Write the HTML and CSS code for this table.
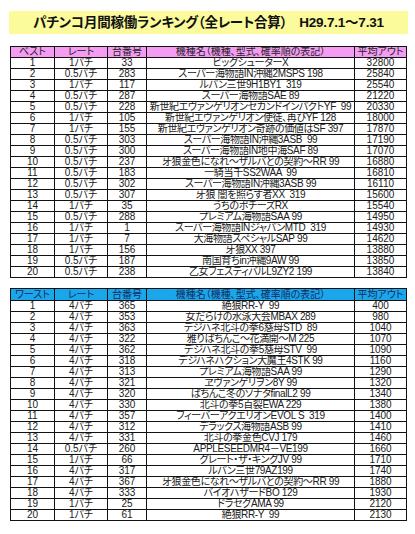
FILE: index.html
```html
<!DOCTYPE html>
<html lang="ja">
<head>
<meta charset="utf-8">
<title>パチンコ月間稼働ランキング</title>
<link rel="stylesheet" href="styles.css">
</head>
<body>
<div class="page">
  <div class="title">パチンコ月間稼働ランキング（全レート合算）<span class="period">H29.7.1～7.31</span></div>

  <table class="rank best">
    <colgroup><col class="c1"><col class="c2"><col class="c3"><col class="c4"><col class="c5"></colgroup>
    <thead><tr><th>ベスト</th><th>レート</th><th>台番号</th><th>機種名（機種、型式、確率順の表記）</th><th>平均アウト</th></tr></thead>
    <tbody>
      <tr><td>1</td><td>1パチ</td><td>33</td><td class="name">ビッグシューターX</td><td>32800</td></tr>
      <tr><td>2</td><td>0.5パチ</td><td>283</td><td class="name">スーパー海物語IN沖縄2MSPS 198</td><td>25840</td></tr>
      <tr><td>3</td><td>1パチ</td><td>117</td><td class="name">ルパン三世9H1BY1  319</td><td>25540</td></tr>
      <tr><td>4</td><td>0.5パチ</td><td>287</td><td class="name">スーパー海物語SAE 89</td><td>21220</td></tr>
      <tr><td>5</td><td>0.5パチ</td><td>228</td><td class="name">新世紀エヴァンゲリオンセカンドインパクトYF  99</td><td>20330</td></tr>
      <tr><td>6</td><td>1パチ</td><td>105</td><td class="name">新世紀エヴァンゲリオン使徒、再びYF 128</td><td>18000</td></tr>
      <tr><td>7</td><td>1パチ</td><td>155</td><td class="name">新世紀エヴァンゲリオン奇跡の価値はSF 397</td><td>17870</td></tr>
      <tr><td>8</td><td>0.5パチ</td><td>303</td><td class="name">スーパー海物語IN沖縄3ASB  99</td><td>17190</td></tr>
      <tr><td>9</td><td>0.5パチ</td><td>300</td><td class="name">スーパー海物語IN地中海SAF 89</td><td>17070</td></tr>
      <tr><td>10</td><td>0.5パチ</td><td>237</td><td class="name">牙狼金色になれ～ザルバとの契約～RR 99</td><td>16880</td></tr>
      <tr><td>11</td><td>0.5パチ</td><td>183</td><td class="name">一騎当千SS2WAA  99</td><td>16810</td></tr>
      <tr><td>12</td><td>0.5パチ</td><td>302</td><td class="name">スーパー海物語IN沖縄3ASB 99</td><td>16110</td></tr>
      <tr><td>13</td><td>0.5パチ</td><td>307</td><td class="name">牙狼 闇を照らす者XX  319</td><td>15600</td></tr>
      <tr><td>14</td><td>1パチ</td><td>35</td><td class="name">うちのポチーズRX</td><td>15540</td></tr>
      <tr><td>15</td><td>0.5パチ</td><td>288</td><td class="name">プレミアム海物語SAA 99</td><td>14950</td></tr>
      <tr><td>16</td><td>1パチ</td><td>1</td><td class="name">スーパー海物語INジャパンMTD  319</td><td>14930</td></tr>
      <tr><td>17</td><td>1パチ</td><td>7</td><td class="name">大海物語スペシャルSAP 99</td><td>14620</td></tr>
      <tr><td>18</td><td>1パチ</td><td>156</td><td class="name">牙狼XX 397</td><td>13880</td></tr>
      <tr><td>19</td><td>0.5パチ</td><td>187</td><td class="name">南国育ちin沖縄9AW 99</td><td>13850</td></tr>
      <tr><td>20</td><td>0.5パチ</td><td>238</td><td class="name">乙女フェスティバルL9ZY2 199</td><td>13840</td></tr>
    </tbody>
  </table>

  <table class="rank worst">
    <colgroup><col class="c1"><col class="c2"><col class="c3"><col class="c4"><col class="c5"></colgroup>
    <thead><tr><th>ワースト</th><th>レート</th><th>台番号</th><th>機種名（機種、型式、確率順の表記）</th><th>平均アウト</th></tr></thead>
    <tbody>
      <tr><td>1</td><td>4パチ</td><td>365</td><td class="name">絶狼RR-Y  99</td><td>400</td></tr>
      <tr><td>2</td><td>4パチ</td><td>353</td><td class="name">女だらけの水泳大会MBAX 289</td><td>980</td></tr>
      <tr><td>3</td><td>4パチ</td><td>363</td><td class="name">デジハネ北斗の拳6慈母STD  89</td><td>1040</td></tr>
      <tr><td>4</td><td>4パチ</td><td>322</td><td class="name">雅りぱちんこ～花満開～M 225</td><td>1070</td></tr>
      <tr><td>5</td><td>4パチ</td><td>362</td><td class="name">デジハネ北斗の拳5慈母STV  99</td><td>1090</td></tr>
      <tr><td>6</td><td>4パチ</td><td>318</td><td class="name">デジハネハクション大魔王4STK 99</td><td>1160</td></tr>
      <tr><td>7</td><td>4パチ</td><td>313</td><td class="name">プレミアム海物語SAA 99</td><td>1290</td></tr>
      <tr><td>8</td><td>4パチ</td><td>321</td><td class="name">ヱヴァンゲリヲン8Y 99</td><td>1320</td></tr>
      <tr><td>9</td><td>4パチ</td><td>320</td><td class="name">ぱちんこ冬のソナタfinalL2 99</td><td>1340</td></tr>
      <tr><td>10</td><td>4パチ</td><td>330</td><td class="name">北斗の拳5百裂EWA 229</td><td>1380</td></tr>
      <tr><td>11</td><td>4パチ</td><td>357</td><td class="name">フィーバーアクエリオンEVOL S  319</td><td>1400</td></tr>
      <tr><td>12</td><td>4パチ</td><td>312</td><td class="name">デラックス海物語ASB 99</td><td>1410</td></tr>
      <tr><td>13</td><td>4パチ</td><td>331</td><td class="name">北斗の拳金色CVJ 179</td><td>1460</td></tr>
      <tr><td>14</td><td>0.5パチ</td><td>260</td><td class="name">APPLESEEDMR4－VE199</td><td>1660</td></tr>
      <tr><td>15</td><td>1パチ</td><td>66</td><td class="name">グレート・ザ・キングJV 99</td><td>1710</td></tr>
      <tr><td>16</td><td>4パチ</td><td>317</td><td class="name">ルパン三世79AZ199</td><td>1740</td></tr>
      <tr><td>17</td><td>4パチ</td><td>367</td><td class="name">牙狼金色になれ～ザルバとの契約～RR 99</td><td>1880</td></tr>
      <tr><td>18</td><td>4パチ</td><td>333</td><td class="name">バイオハザードBO 129</td><td>1930</td></tr>
      <tr><td>19</td><td>1パチ</td><td>25</td><td class="name">ドラセグAMA 99</td><td>2120</td></tr>
      <tr><td>20</td><td>1パチ</td><td>61</td><td class="name">絶狼RR-Y  99</td><td>2130</td></tr>
    </tbody>
  </table>
</div>
</body>
</html>
```

FILE: styles.css
```css
html, body {
  margin: 0;
  padding: 0;
  background: #ffffff;
}

body {
  font-family: "Liberation Sans", "Noto Sans CJK JP", sans-serif;
  font-feature-settings: "palt" 1;
  color: #1a1a1a;
}

.page {
  padding: 11px 0 0 9px;
}

.title {
  width: 399px;
  height: 23px;
  background: #fbfb9c;
  font-size: 13.5px;
  font-weight: bold;
  line-height: 23px;
  text-align: center;
  color: #111111;
  white-space: nowrap;
  letter-spacing: -0.2px;
}

.period {
  margin-left: 12px;
}

.rank {
  border-collapse: collapse;
  table-layout: fixed;
  width: 396px;
  margin-left: 1px;
  font-size: 10px;
}

.best {
  margin-top: 12px;
}

.worst {
  margin-top: 10px;
}

.c1 { width: 44px; }
.c2 { width: 53px; }
.c3 { width: 39px; }
.c4 { width: 208px; }
.c5 { width: 52px; }

.rank th,
.rank td {
  border: 1px solid #111111;
  padding: 0;
  height: 10px;
  line-height: 10px;
  text-align: center;
  white-space: pre;
  overflow: visible;
  font-weight: normal;
}

.rank td.name {
  letter-spacing: -0.35px;
  color: #202020;
}

.best th {
  background: #f49cf2;
  color: #222222;
}

.worst th {
  background: #1aa6ea;
  color: #172a5c;
  height: 11px;
  line-height: 11px;
}
```
